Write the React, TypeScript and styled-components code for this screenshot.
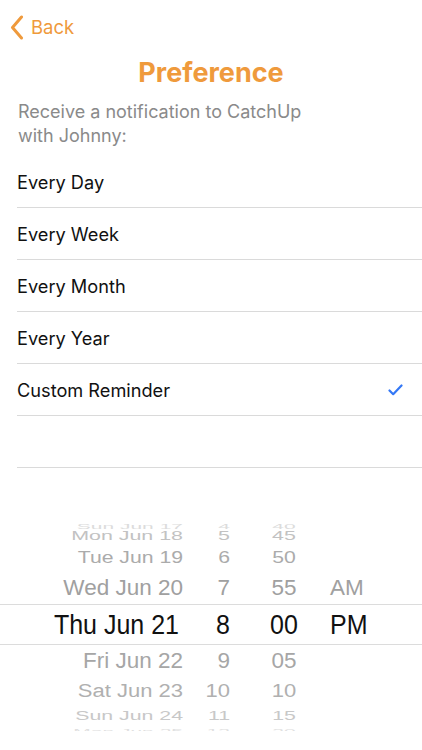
import styled, { createGlobalStyle } from "styled-components"

const GlobalStyle = createGlobalStyle`
  body {
    margin: 0;
    background: #fff;
    font-family: Inter, "Liberation Sans", sans-serif;
  }
`

const ORANGE = "#EF9A3C"

const Page = styled.div`
  width: 422px;
  height: 750px;
  overflow: hidden;
  background: #fff;
`
const NavBar = styled.div`
  height: 54px;
  display: flex;
  align-items: center;
  padding-left: 10px;
  gap: 7px;
  color: ${ORANGE};
  font-size: 18.5px;
`
const Title = styled.h1`
  margin: 0;
  text-align: center;
  color: ${ORANGE};
  font-size: 27px;
  font-weight: 700;
  line-height: 38px;
`
const Description = styled.p`
  margin: 8px 0 0;
  padding-left: 18px;
  width: 300px;
  color: #8a8a8a;
  font-size: 18px;
  line-height: 24px;
`
const List = styled.div`
  margin-top: 8px;
  padding-left: 17px;
`
const Row = styled.div`
  height: 51px;
  border-bottom: 1px solid #dadada;
  display: flex;
  align-items: center;
  justify-content: space-between;
  padding-right: 19px;
  font-size: 18.2px;
  color: #111;
`
const Picker = styled.div`
  margin-top: 48px;
  height: 215px;
  overflow: hidden;
`
const PickerRow = styled.div<{ $h: number; $selected: boolean }>`
  height: ${(p) => p.$h}px;
  display: grid;
  grid-template-columns: 183px 47px 100px 1fr;
  align-items: center;
  font-family: "Liberation Sans", Arial, sans-serif;
  border-top: ${(p) => (p.$selected ? "1px solid #dcdcdc" : "none")};
  border-bottom: ${(p) => (p.$selected ? "1px solid #dcdcdc" : "none")};
  box-sizing: border-box;
`
const Cell = styled.span<{ $align: string; $size: number; $sy: number; $color: string }>`
  display: block;
  text-align: ${(p) => p.$align};
  font-size: ${(p) => p.$size}px;
  line-height: 1;
  color: ${(p) => p.$color};
  transform: scaleY(${(p) => p.$sy});
  white-space: nowrap;
`
const DateCell = styled(Cell)<{ $pad: number }>`
  padding-right: ${(p) => p.$pad}px;
`
const MinuteCell = styled(Cell)`
  padding-left: 8px;
`

const options = ["Every Day", "Every Week", "Every Month", "Every Year", "Custom Reminder", ""]

const wheel = [
  { d: "Sun Jun 17", h: "4", m: "40", ap: "", rh: 10, size: 21, sy: 0.35, color: "#dcdcdc" },
  { d: "Mon Jun 18", h: "5", m: "45", ap: "", rh: 18, size: 21.4, sy: 0.6, color: "#c2c2c2" },
  { d: "Tue Jun 19", h: "6", m: "50", ap: "", rh: 28, size: 21.2, sy: 0.78, color: "#ababab" },
  { d: "Wed Jun 20", h: "7", m: "55", ap: "AM", rh: 32, size: 22.5, sy: 1, color: "#a0a0a0" },
  { d: "Thu Jun 21", h: "8", m: "00", ap: "PM", rh: 41, size: 25, sy: 1.1, color: "#111" },
  { d: "Fri Jun 22", h: "9", m: "05", ap: "", rh: 32, size: 22.5, sy: 1, color: "#a6a6a6" },
  { d: "Sat Jun 23", h: "10", m: "10", ap: "", rh: 28, size: 22, sy: 0.82, color: "#b0b0b0" },
  { d: "Sun Jun 24", h: "11", m: "15", ap: "", rh: 16, size: 21.3, sy: 0.62, color: "#c8c8c8" },
  { d: "Mon Jun 25", h: "12", m: "20", ap: "", rh: 10, size: 21, sy: 0.35, color: "#e0e0e0" },
]

const Chevron = () => (
  <svg width="14" height="25" viewBox="0 0 14 25">
    <path d="M11.5 2 L2.5 12.5 L11.5 23" fill="none" stroke={ORANGE} strokeWidth="3" strokeLinecap="round" strokeLinejoin="round" />
  </svg>
)

const Check = () => (
  <svg width="15" height="12" viewBox="0 0 15 12">
    <path d="M1.5 6.5 L5.2 10.2 L13.5 1.5" fill="none" stroke="#3478F6" strokeWidth="2.2" strokeLinecap="round" strokeLinejoin="round" />
  </svg>
)

const App = () => {
  return (
    <Page>
      <GlobalStyle />
      <NavBar>
        <Chevron />
        <span>Back</span>
      </NavBar>
      <Title>Preference</Title>
      <Description>Receive a notification to CatchUp with Johnny:</Description>
      <List>
        {options.map((o, i) => (
          <Row key={i}>
            <span>{o}</span>
            {o === "Custom Reminder" && <Check />}
          </Row>
        ))}
      </List>
      <Picker>
        {wheel.map((w, i) => (
          <PickerRow key={i} $h={w.rh} $selected={i === 4}>
            <DateCell $align="right" $pad={i === 4 ? 4 : 0} $size={w.size} $sy={w.sy} $color={w.color}>{w.d}</DateCell>
            <Cell $align="right" $size={w.size} $sy={w.sy} $color={w.color}>{w.h}</Cell>
            <MinuteCell $align="center" $size={w.size} $sy={w.sy} $color={w.color}>{w.m}</MinuteCell>
            <Cell $align="left" $size={w.size} $sy={w.sy} $color={w.color}>{w.ap}</Cell>
          </PickerRow>
        ))}
      </Picker>
    </Page>
  )
}

export default App
